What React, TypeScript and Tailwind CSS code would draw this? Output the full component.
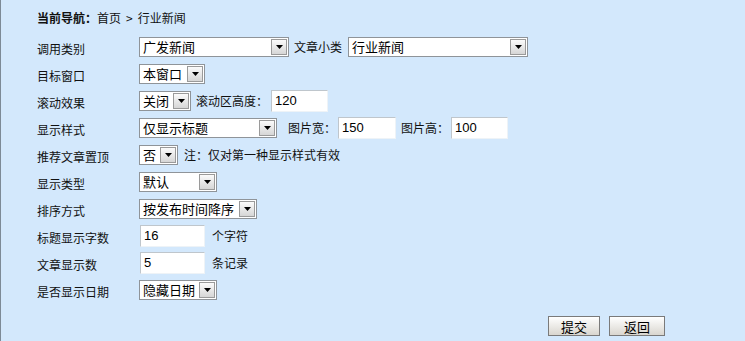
import React from "react";

const cjk = { fontFamily: '"Noto Sans CJK SC", "Liberation Sans", sans-serif' };

function Arrow() {
  return (
    <div className="ml-auto flex h-[16px] w-[16px] shrink-0 items-center justify-center border border-[#9a9a9a] bg-gradient-to-b from-[#fbfbfb] to-[#d6d6d6]">
      <svg width="7" height="4" viewBox="0 0 7 4">
        <polygon points="0,0 7,0 3.5,4" fill="#000" />
      </svg>
    </div>
  );
}

function Select({ text, w }: { text: string; w: string }) {
  return (
    <div className={`flex h-[20px] items-center border border-[#8f9499] bg-white pl-[3px] pr-[1px] ${w}`}>
      <span className="text-[13px] leading-none text-black" style={cjk}>
        {text}
      </span>
      <Arrow />
    </div>
  );
}

function Input({ value, w }: { value: string; w: string }) {
  return (
    <div className={`flex h-[22px] items-center border border-t-[#bfc6cc] border-l-[#bfc6cc] border-r-[#eef3f7] border-b-[#eef3f7] bg-white pl-[3px] ${w}`}>
      <span className="text-[13px] leading-none text-black" style={{ fontFamily: '"Liberation Sans", Arial, sans-serif' }}>
        {value}
      </span>
    </div>
  );
}

function Label({ children, className = "" }: { children: React.ReactNode; className?: string }) {
  return (
    <span className={`text-[12px] leading-none text-[#111] ${className}`} style={cjk}>
      {children}
    </span>
  );
}

function Row({ label, children }: { label: string; children: React.ReactNode }) {
  return (
    <div className="flex h-[27px] items-center">
      <div className="w-[102px] shrink-0">
        <Label>{label}</Label>
      </div>
      <div className="flex items-center">{children}</div>
    </div>
  );
}

export default function App() {
  return (
    <div className="h-[341px] w-[745px] overflow-hidden border-l border-l-[#7d8a96] bg-[#d3e8fc]" style={cjk}>
      <div className="pl-[36px] pt-[9px]">
        <div className="flex h-[18px] items-center text-[12px] text-[#111]">
          <span className="font-bold">当前导航：</span>
          <span>首页</span>
          <span className="mx-[5px]">&gt;</span>
          <span>行业新闻</span>
        </div>
        <div className="mt-[6px] flex flex-col">
          <Row label="调用类别">
            <Select text="广发新闻" w="w-[150px]" />
            <Label className="ml-[5px] mr-[6px]">文章小类</Label>
            <Select text="行业新闻" w="w-[180px]" />
          </Row>
          <Row label="目标窗口">
            <Select text="本窗口" w="w-[66px]" />
          </Row>
          <Row label="滚动效果">
            <Select text="关闭" w="w-[52px]" />
            <Label className="ml-[5px] mr-[3px]">滚动区高度：</Label>
            <Input value="120" w="w-[57px]" />
          </Row>
          <Row label="显示样式">
            <Select text="仅显示标题" w="w-[138px]" />
            <Label className="ml-[11px] mr-[2px]">图片宽：</Label>
            <Input value="150" w="w-[58px]" />
            <Label className="ml-[5px] mr-[2px]">图片高：</Label>
            <Input value="100" w="w-[57px]" />
          </Row>
          <Row label="推荐文章置顶">
            <Select text="否" w="w-[39px]" />
            <Label className="ml-[6px]">注：仅对第一种显示样式有效</Label>
          </Row>
          <Row label="显示类型">
            <Select text="默认" w="w-[78px]" />
          </Row>
          <Row label="排序方式">
            <Select text="按发布时间降序" w="w-[118px]" />
          </Row>
          <Row label="标题显示字数">
            <Input value="16" w="w-[65px] ml-[1px]" />
            <Label className="ml-[7px]">个字符</Label>
          </Row>
          <Row label="文章显示数">
            <Input value="5" w="w-[65px] ml-[1px]" />
            <Label className="ml-[7px]">条记录</Label>
          </Row>
          <Row label="是否显示日期">
            <Select text="隐藏日期" w="w-[78px]" />
          </Row>
        </div>
        <div className="mt-[13px] flex pl-[511px]">
          <button className="flex h-[20px] w-[52px] items-center justify-center border border-[#7a7a7a] bg-gradient-to-b from-[#ffffff] to-[#d9d6cf] text-[13px] leading-none text-black" style={cjk}>
            提交
          </button>
          <button className="ml-[9px] flex h-[20px] w-[56px] items-center justify-center border border-[#7a7a7a] bg-gradient-to-b from-[#ffffff] to-[#d9d6cf] text-[13px] leading-none text-black" style={cjk}>
            返回
          </button>
        </div>
      </div>
    </div>
  );
}
